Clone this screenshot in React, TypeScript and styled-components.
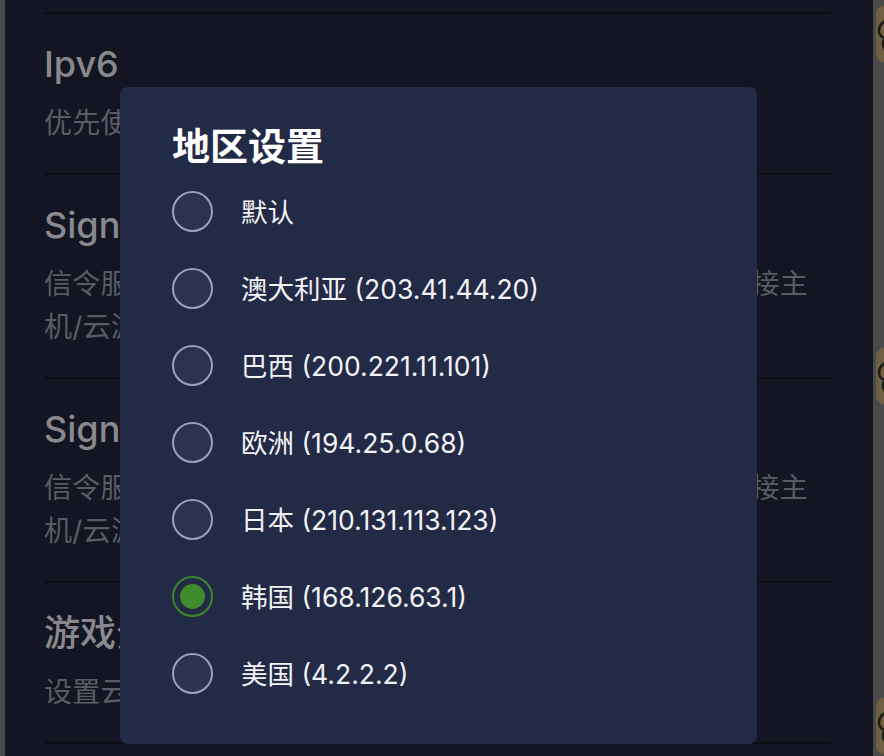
import React from "react";
import styled, { createGlobalStyle } from "styled-components";

const Global = createGlobalStyle`
  html, body { margin: 0; padding: 0; background: #131622; overflow: hidden; }
  * { box-sizing: border-box; }
  body { font-family: "Inter", "Noto Sans CJK SC", sans-serif; }
`;

const Screen = styled.div`
  position: relative;
  display: flex;
  width: 884px;
  height: 756px;
  overflow: hidden;
  background: #131622;
`;

const LeftEdge = styled.div`
  width: 5px;
  flex-shrink: 0;
  background: #4a4a4a;
`;

const Main = styled.div`
  flex: 1;
  padding: 12px 43px 0 39px;
  overflow: hidden;
`;

const Item = styled.div`
  border-top: 2px solid #0b0d14;
  padding: 26px 0 28px;
  display: flex;
  flex-direction: column;
  gap: 14px;
`;

const Divider = styled.div`
  height: 2px;
  background: #0b0d14;
`;

const ItemTitle = styled.div`
  font-family: "Inter", "Noto Sans CJK SC", sans-serif;
  font-size: 36px;
  font-weight: 500;
  line-height: 48px;
  color: #89898d;
  white-space: nowrap;
`;

const ItemDesc = styled.div`
  font-family: "Inter", "Noto Sans CJK SC", sans-serif;
  font-size: 28px;
  line-height: 43px;
  color: #5a5c64;
  max-width: 776px;
  letter-spacing: 0.3px;
`;

const RightEdge = styled.div`
  width: 11px;
  flex-shrink: 0;
  background: #4a4a4a;
  display: flex;
  flex-direction: column;
  overflow: hidden;
`;

const Thumb = styled.div<{ $top: number }>`
  margin-top: ${(p) => p.$top}px;
  margin-left: 3px;
  width: 56px;
  height: 56px;
  flex-shrink: 0;
  border-radius: 8px;
  background: #6f6040;
  display: flex;
  align-items: center;
  padding-left: 1px;
`;

const Dialog = styled.div`
  position: absolute;
  left: 120px;
  top: 87px;
  width: 637px;
  padding: 32px 52px 32px;
  background: #232a45;
  border-radius: 8px;
  display: flex;
  flex-direction: column;
`;

const DialogTitle = styled.div`
  font-family: "Noto Sans CJK SC", sans-serif;
  font-size: 38px;
  font-weight: 700;
  line-height: 50px;
  color: #ffffff;
  margin-bottom: 4px;
`;

const Option = styled.div`
  display: flex;
  align-items: center;
  height: 77px;
  gap: 28px;
`;

const Radio = styled.div<{ $checked: boolean }>`
  width: 41px;
  height: 41px;
  flex-shrink: 0;
  border-radius: 50%;
  border: 2px solid ${(p) => (p.$checked ? "#3a8a2b" : "#9ba0c2")};
  background: ${(p) => (p.$checked ? "transparent" : "#2c3250")};
  display: flex;
  align-items: center;
  justify-content: center;
`;

const Dot = styled.div`
  width: 25px;
  height: 25px;
  border-radius: 50%;
  background: #3e8c2b;
`;

const OptionLabel = styled.div`
  font-family: "Inter", "Noto Sans CJK SC", sans-serif;
  font-size: 26.5px;
  line-height: 36px;
  color: #f2f2f6;
  white-space: nowrap;
`;

const items = [
  { title: "Ipv6", desc: "优先使用Ipv6进行连接" },
  {
    title: "Signaling Server",
    desc: "信令服务器地址，用于在不同网络环境下发现、匹配并连接主机/云游戏服务器",
  },
  {
    title: "Signaling Server (备用)",
    desc: "信令服务器地址，用于在不同网络环境下发现、匹配并连接主机/云游戏服务器",
  },
  { title: "游戏分区设置", desc: "设置云游戏服务器所在的地区" },
];

const options = [
  "默认",
  "澳大利亚 (203.41.44.20)",
  "巴西 (200.221.11.101)",
  "欧洲 (194.25.0.68)",
  "日本 (210.131.113.123)",
  "韩国 (168.126.63.1)",
  "美国 (4.2.2.2)",
];

const ThumbIcon = () => (
  <svg width="14" height="40" viewBox="0 0 14 40">
    <path
      d="M14 6 C6 6 2 11 2 17 C2 21 5 24 9 24 L14 24 M8 24 C5 27 5 33 9 36 L14 37"
      fill="none"
      stroke="#1c1c1c"
      strokeWidth="2.5"
    />
  </svg>
);

export default function App() {
  const selected = 5;
  return (
    <>
      <Global />
      <Screen>
        <LeftEdge />
        <Main>
          {items.map((it, i) => (
            <Item key={i}>
              <ItemTitle>{it.title}</ItemTitle>
              <ItemDesc>{it.desc}</ItemDesc>
            </Item>
          ))}
          <Divider />
        </Main>
        <RightEdge>
          <Thumb $top={6}>
            <ThumbIcon />
          </Thumb>
          <Thumb $top={286}>
            <ThumbIcon />
          </Thumb>
          <Thumb $top={294}>
            <ThumbIcon />
          </Thumb>
        </RightEdge>
        <Dialog>
          <DialogTitle>地区设置</DialogTitle>
          {options.map((o, i) => (
            <Option key={o}>
              <Radio $checked={i === selected}>{i === selected && <Dot />}</Radio>
              <OptionLabel>{o}</OptionLabel>
            </Option>
          ))}
        </Dialog>
      </Screen>
    </>
  );
}
